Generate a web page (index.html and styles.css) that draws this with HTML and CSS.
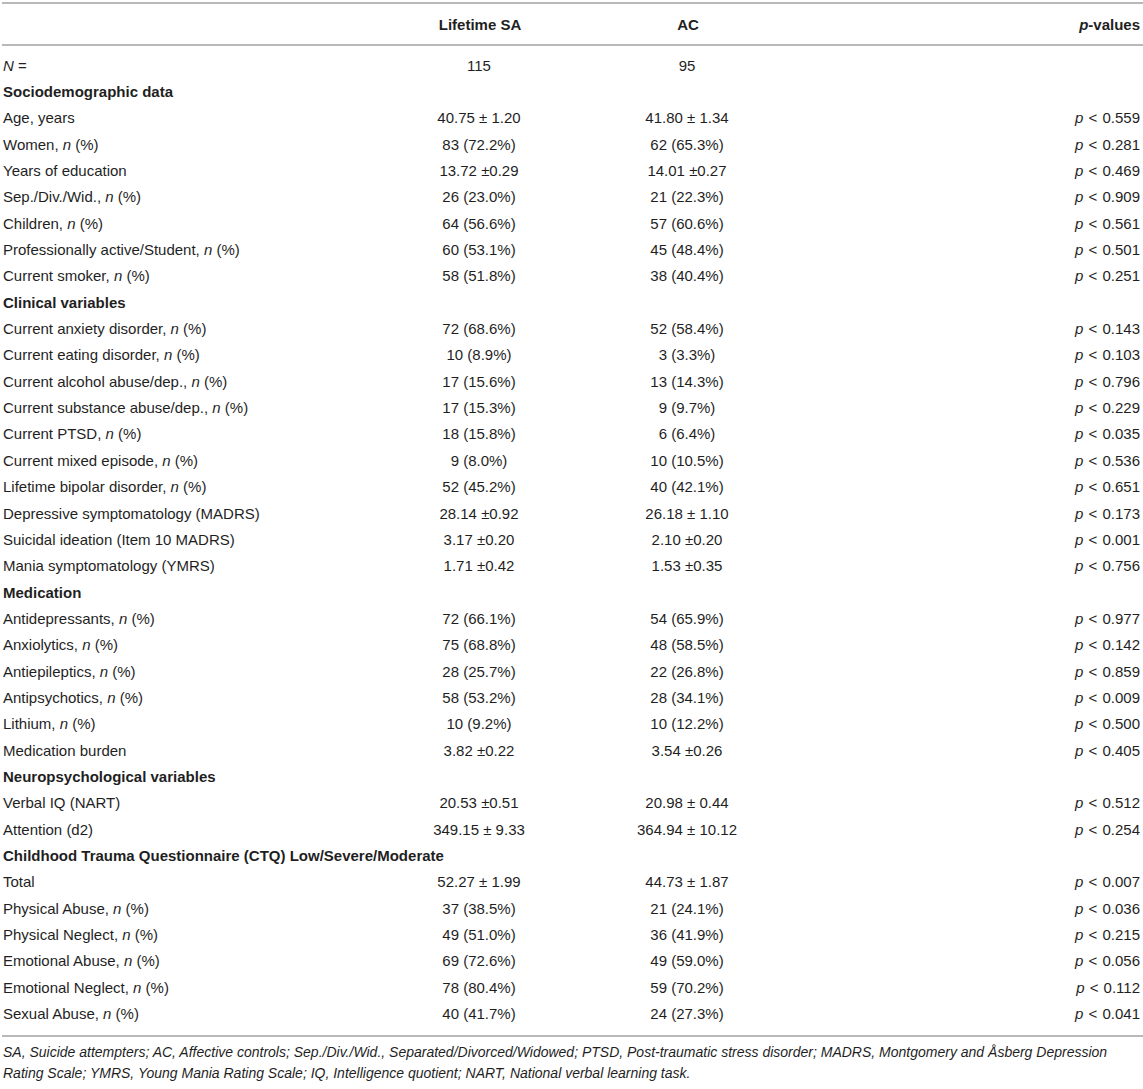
FILE: index.html
```html
<!DOCTYPE html>
<html>
<head>
<meta charset="utf-8">
<link rel="stylesheet" href="styles.css">
</head>
<body>
<div class="wrap">
<table class="data">
<colgroup><col class="c1"><col class="c2"><col class="c3"><col class="c4"></colgroup>
<thead>
<tr><th class="lbl"></th><th>Lifetime SA</th><th>AC</th><th class="pv"><i>p</i>-values</th></tr>
</thead>
<tbody>
<tr class="first"><td class="lbl"><i>N</i> =</td><td>115</td><td>95</td><td class="pv"></td></tr>
<tr class="sec"><td colspan="4">Sociodemographic data</td></tr>
<tr><td class="lbl">Age, years</td><td>40.75 ± 1.20</td><td>41.80 ± 1.34</td><td class="pv"><i>p</i> &lt; 0.559</td></tr>
<tr><td class="lbl">Women, <i>n</i> (%)</td><td>83 (72.2%)</td><td>62 (65.3%)</td><td class="pv"><i>p</i> &lt; 0.281</td></tr>
<tr><td class="lbl">Years of education</td><td>13.72 ±0.29</td><td>14.01 ±0.27</td><td class="pv"><i>p</i> &lt; 0.469</td></tr>
<tr><td class="lbl">Sep./Div./Wid., <i>n</i> (%)</td><td>26 (23.0%)</td><td>21 (22.3%)</td><td class="pv"><i>p</i> &lt; 0.909</td></tr>
<tr><td class="lbl">Children, <i>n</i> (%)</td><td>64 (56.6%)</td><td>57 (60.6%)</td><td class="pv"><i>p</i> &lt; 0.561</td></tr>
<tr><td class="lbl">Professionally active/Student, <i>n</i> (%)</td><td>60 (53.1%)</td><td>45 (48.4%)</td><td class="pv"><i>p</i> &lt; 0.501</td></tr>
<tr><td class="lbl">Current smoker, <i>n</i> (%)</td><td>58 (51.8%)</td><td>38 (40.4%)</td><td class="pv"><i>p</i> &lt; 0.251</td></tr>
<tr class="sec"><td colspan="4">Clinical variables</td></tr>
<tr><td class="lbl">Current anxiety disorder, <i>n</i> (%)</td><td>72 (68.6%)</td><td>52 (58.4%)</td><td class="pv"><i>p</i> &lt; 0.143</td></tr>
<tr><td class="lbl">Current eating disorder, <i>n</i> (%)</td><td>10 (8.9%)</td><td>3 (3.3%)</td><td class="pv"><i>p</i> &lt; 0.103</td></tr>
<tr><td class="lbl">Current alcohol abuse/dep., <i>n</i> (%)</td><td>17 (15.6%)</td><td>13 (14.3%)</td><td class="pv"><i>p</i> &lt; 0.796</td></tr>
<tr><td class="lbl">Current substance abuse/dep., <i>n</i> (%)</td><td>17 (15.3%)</td><td>9 (9.7%)</td><td class="pv"><i>p</i> &lt; 0.229</td></tr>
<tr><td class="lbl">Current PTSD, <i>n</i> (%)</td><td>18 (15.8%)</td><td>6 (6.4%)</td><td class="pv"><i>p</i> &lt; 0.035</td></tr>
<tr><td class="lbl">Current mixed episode, <i>n</i> (%)</td><td>9 (8.0%)</td><td>10 (10.5%)</td><td class="pv"><i>p</i> &lt; 0.536</td></tr>
<tr><td class="lbl">Lifetime bipolar disorder, <i>n</i> (%)</td><td>52 (45.2%)</td><td>40 (42.1%)</td><td class="pv"><i>p</i> &lt; 0.651</td></tr>
<tr><td class="lbl">Depressive symptomatology (MADRS)</td><td>28.14 ±0.92</td><td>26.18 ± 1.10</td><td class="pv"><i>p</i> &lt; 0.173</td></tr>
<tr><td class="lbl">Suicidal ideation (Item 10 MADRS)</td><td>3.17 ±0.20</td><td>2.10 ±0.20</td><td class="pv"><i>p</i> &lt; 0.001</td></tr>
<tr><td class="lbl">Mania symptomatology (YMRS)</td><td>1.71 ±0.42</td><td>1.53 ±0.35</td><td class="pv"><i>p</i> &lt; 0.756</td></tr>
<tr class="sec"><td colspan="4">Medication</td></tr>
<tr><td class="lbl">Antidepressants, <i>n</i> (%)</td><td>72 (66.1%)</td><td>54 (65.9%)</td><td class="pv"><i>p</i> &lt; 0.977</td></tr>
<tr><td class="lbl">Anxiolytics, <i>n</i> (%)</td><td>75 (68.8%)</td><td>48 (58.5%)</td><td class="pv"><i>p</i> &lt; 0.142</td></tr>
<tr><td class="lbl">Antiepileptics, <i>n</i> (%)</td><td>28 (25.7%)</td><td>22 (26.8%)</td><td class="pv"><i>p</i> &lt; 0.859</td></tr>
<tr><td class="lbl">Antipsychotics, <i>n</i> (%)</td><td>58 (53.2%)</td><td>28 (34.1%)</td><td class="pv"><i>p</i> &lt; 0.009</td></tr>
<tr><td class="lbl">Lithium, <i>n</i> (%)</td><td>10 (9.2%)</td><td>10 (12.2%)</td><td class="pv"><i>p</i> &lt; 0.500</td></tr>
<tr><td class="lbl">Medication burden</td><td>3.82 ±0.22</td><td>3.54 ±0.26</td><td class="pv"><i>p</i> &lt; 0.405</td></tr>
<tr class="sec"><td colspan="4">Neuropsychological variables</td></tr>
<tr><td class="lbl">Verbal IQ (NART)</td><td>20.53 ±0.51</td><td>20.98 ± 0.44</td><td class="pv"><i>p</i> &lt; 0.512</td></tr>
<tr><td class="lbl">Attention (d2)</td><td>349.15 ± 9.33</td><td>364.94 ± 10.12</td><td class="pv"><i>p</i> &lt; 0.254</td></tr>
<tr class="sec"><td colspan="4">Childhood Trauma Questionnaire (CTQ) Low/Severe/Moderate</td></tr>
<tr><td class="lbl">Total</td><td>52.27 ± 1.99</td><td>44.73 ± 1.87</td><td class="pv"><i>p</i> &lt; 0.007</td></tr>
<tr><td class="lbl">Physical Abuse, <i>n</i> (%)</td><td>37 (38.5%)</td><td>21 (24.1%)</td><td class="pv"><i>p</i> &lt; 0.036</td></tr>
<tr><td class="lbl">Physical Neglect, <i>n</i> (%)</td><td>49 (51.0%)</td><td>36 (41.9%)</td><td class="pv"><i>p</i> &lt; 0.215</td></tr>
<tr><td class="lbl">Emotional Abuse, <i>n</i> (%)</td><td>69 (72.6%)</td><td>49 (59.0%)</td><td class="pv"><i>p</i> &lt; 0.056</td></tr>
<tr><td class="lbl">Emotional Neglect, <i>n</i> (%)</td><td>78 (80.4%)</td><td>59 (70.2%)</td><td class="pv"><i>p</i> &lt; 0.112</td></tr>
<tr class="last"><td class="lbl">Sexual Abuse, <i>n</i> (%)</td><td>40 (41.7%)</td><td>24 (27.3%)</td><td class="pv"><i>p</i> &lt; 0.041</td></tr>
</tbody>
</table>
<p class="note">SA, Suicide attempters; AC, Affective controls; Sep./Div./Wid., Separated/Divorced/Widowed; PTSD, Post-traumatic stress disorder; MADRS, Montgomery and Åsberg Depression Rating Scale; YMRS, Young Mania Rating Scale; IQ, Intelligence quotient; NART, National verbal learning task.</p>
</div>
</body>
</html>
```
FILE: styles.css
```css
html, body {
  margin: 0;
  padding: 0;
  background: #ffffff;
}
.wrap {
  padding: 2px 0 0 2px;
  font-family: "Liberation Sans", Arial, Helvetica, sans-serif;
  color: #1f1f1f;
}
.data {
  width: 1141px;
  border-collapse: collapse;
  table-layout: fixed;
  font-size: 15px;
}
.c1 { width: 374px; }
.c2 { width: 208px; }
.c3 { width: 208px; }
.c4 { width: 351px; }
.data thead th {
  height: 39px;
  padding: 1px 3px 0 3px;
  font-weight: bold;
  text-align: center;
  border-top: 2px solid #b8b8b8;
  border-bottom: 2px solid #b8b8b8;
}
.data td {
  height: 26.35px;
  padding: 0 3px 0 1px;
  text-align: center;
  vertical-align: middle;
  white-space: nowrap;
}
.data th.pv, .data td.pv {
  text-align: right;
  padding-right: 3px;
  word-spacing: 1px;
}
.data td.lbl, .data th.lbl {
  text-align: left;
}
.data tr.sec td {
  text-align: left;
  font-weight: bold;
}
.data tr.first td {
  padding-top: 6px;
}
.data tr.last td {
  padding-bottom: 8px;
  border-bottom: 2px solid #b8b8b8;
}
.note {
  margin: 5px 0 0 0;
  padding: 0 1px;
  font-size: 14px;
  line-height: 21px;
  font-style: italic;
}
```
